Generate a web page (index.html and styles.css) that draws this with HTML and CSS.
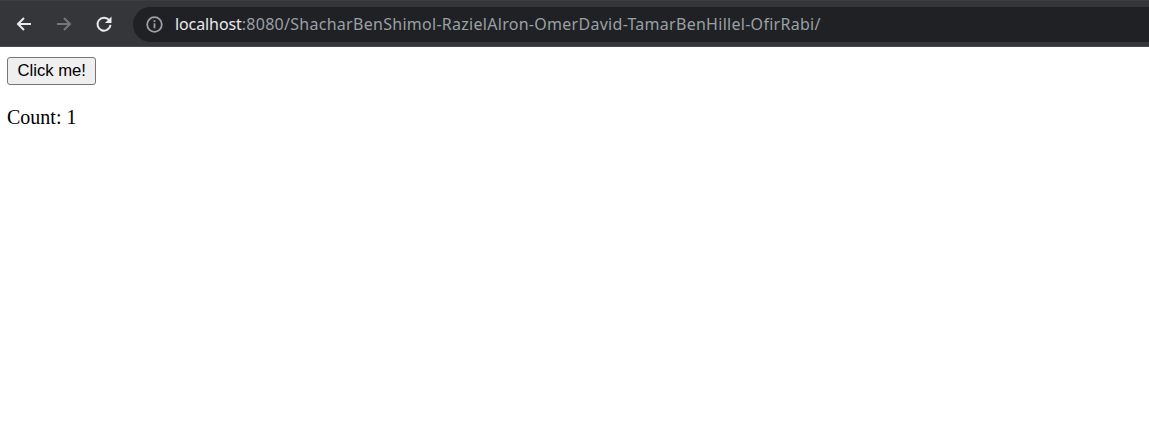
FILE: index.html
```html
<!DOCTYPE html>
<html lang="en">
<head>
<meta charset="utf-8">
<title>localhost</title>
<link rel="stylesheet" href="styles.css">
</head>
<body>
<header class="toolbar">
  <div class="nav-btn">
    <svg width="16" height="16" viewBox="0 0 16 16"><path d="M15 8H2.5M8 2L2 8l6 6" fill="none" stroke="#e8eaed" stroke-width="2"/></svg>
  </div>
  <div class="nav-btn">
    <svg width="16" height="16" viewBox="0 0 16 16"><path d="M1 8h12.5M8 2l6 6-6 6" fill="none" stroke="#75777b" stroke-width="2"/></svg>
  </div>
  <div class="nav-btn">
    <svg width="18" height="18" viewBox="0 0 18 18"><path d="M14.2 5.2A6.5 6.5 0 1 0 15.5 9.8" fill="none" stroke="#e8eaed" stroke-width="2"/><path d="M16.5 1.5v6.5H10z" fill="#e8eaed"/></svg>
  </div>
  <div class="omnibox">
    <svg class="info" width="17" height="17" viewBox="0 0 17 17"><circle cx="8.5" cy="8.5" r="7.3" fill="none" stroke="#9aa0a6" stroke-width="1.8"/><rect x="7.6" y="7.3" width="1.8" height="5" fill="#9aa0a6"/><rect x="7.6" y="4.2" width="1.8" height="1.8" fill="#9aa0a6"/></svg>
    <span class="url"><span class="host">localhost</span>:8080/ShacharBenShimol-RazielAlron-OmerDavid-TamarBenHillel-OfirRabi/</span>
  </div>
</header>
<main class="page">
  <button class="btn" type="button">Click me!</button>
  <p class="count">Count: 1</p>
</main>
</body>
</html>
```
FILE: styles.css
```css
html, body {
  margin: 0;
  padding: 0;
  background: #ffffff;
}
.toolbar {
  height: 45px;
  background: #35363a;
  border-top: 1px solid #3d3e42;
  border-bottom: 1px solid #4a4b4f;
  display: flex;
  align-items: center;
  padding-left: 4px;
  box-sizing: content-box;
  overflow: hidden;
}
.nav-btn {
  width: 40px;
  height: 34px;
  display: flex;
  align-items: center;
  justify-content: center;
  flex: none;
}
.omnibox {
  margin-left: 9px;
  flex: 1;
  height: 35px;
  margin-top: 1px;
  background: #202124;
  border-radius: 18px 0 0 18px;
  display: flex;
  align-items: center;
  padding-left: 13px;
  margin-right: -20px;
  white-space: nowrap;
}
.info { flex: none; }
.url {
  margin-left: 12px;
  font-family: "Noto Sans", "Open Sans", sans-serif;
  font-size: 16px;
  letter-spacing: 0.28px;
  color: #9aa0a6;
}
.host { color: #e8eaed; letter-spacing: -0.1px; }
.page {
  padding: 10px 7px;
}
.btn {
  display: block;
  margin: 0;
  font-family: "Liberation Sans", Arial, sans-serif;
  font-size: 16.67px;
  line-height: 20px;
  color: #000;
  background: #efefef;
  border: 1px solid #767676;
  border-radius: 3px;
  padding: 3px 9.5px;
  height: 28px;
  box-sizing: border-box;
}
.count {
  margin: 21px 0 0;
  font-family: "Liberation Serif", "Times New Roman", serif;
  font-size: 20px;
  line-height: 23px;
  color: #000;
}
```
